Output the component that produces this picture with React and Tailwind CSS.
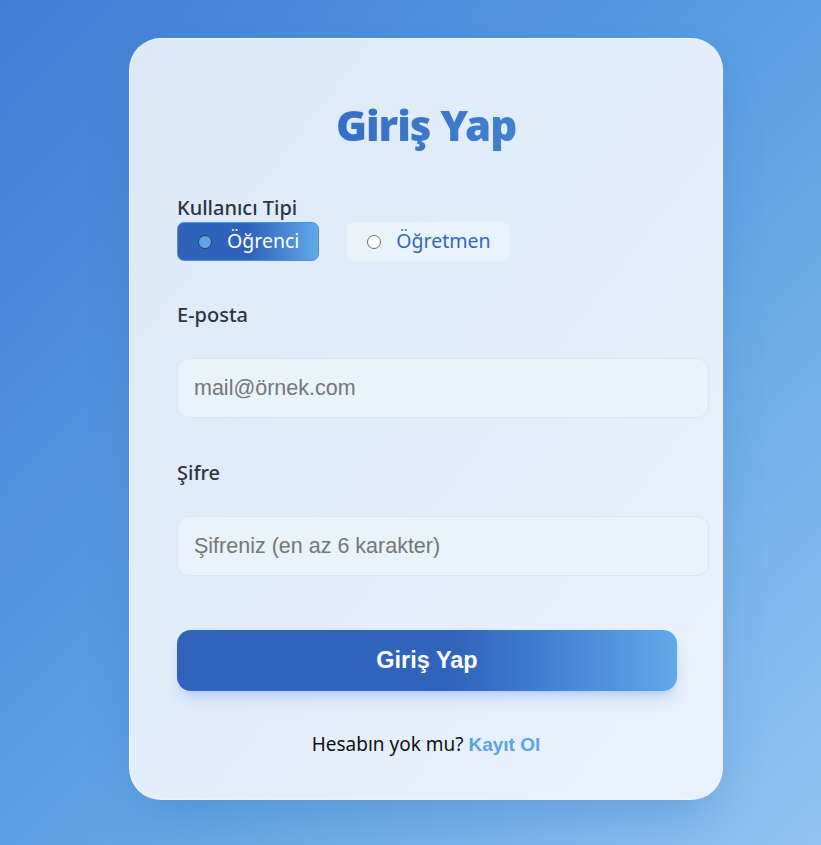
// Login page: user type toggle, email and password fields.
import { useState } from 'react';

const uiFont = "font-['Noto_Sans','Open_Sans',sans-serif]";
const arial = "font-['Liberation_Sans',Arial,sans-serif]";

function RadioChip({ label, active, onClick }) {
  return (
    <button
      type="button"
      onClick={onClick}
      className={`flex items-center h-[39px] pl-[20px] pr-[19px] gap-[15px] rounded-[7px] text-[19.5px] ${
        active
          ? 'bg-gradient-to-r from-[#2e62bb] from-50% to-[#62a9e8] text-white border border-[#4f8fd8]'
          : 'bg-[#e9f3fc] text-[#3467be]'
      }`}
    >
      <span
        className={`w-[14px] h-[14px] rounded-full border-[1.5px] ${
          active ? 'bg-[#5ea4e4] border-[#3a3f48]' : 'bg-white border-[#6b6b6b]'
        }`}
      />
      <span className="leading-none -mt-[2px]">{label}</span>
    </button>
  );
}

export default function App() {
  const [role, setRole] = useState('student');

  return (
    <div className={`min-h-[845px] w-full bg-gradient-to-br from-[#3f7ed2] via-[#5a9fe2] to-[#93c4f2] flex pl-[129px] pt-[38px] ${uiFont}`}>
      <div className="w-[594px] h-[762px] shrink-0 rounded-[32px] bg-gradient-to-br from-[#dde9f8] to-[#e9f2fc] border border-white/40 shadow-2xl shadow-[#2a5fa8]/30 px-[47px] pt-[65px]">
        <h1 className="text-center text-[42px] font-black leading-none tracking-tight bg-gradient-to-r from-[#2c60ba] to-[#4c8ed9] bg-clip-text text-transparent pb-[8px] mb-[43px]">
          Giriş Yap
        </h1>

        <p className="text-[20px] font-medium text-[#2c3442] leading-[22px] mb-[3px]">Kullanıcı Tipi</p>
        <div className="flex gap-[28px]">
          <RadioChip label="Öğrenci" active={role === 'student'} onClick={() => setRole('student')} />
          <RadioChip label="Öğretmen" active={role === 'teacher'} onClick={() => setRole('teacher')} />
        </div>

        <label className="block text-[20px] font-medium text-[#2c3442] leading-[22px] mt-[43px]">E-posta</label>
        <input
          type="email"
          placeholder="mail@örnek.com"
          className={`block mt-[32px] w-[532px] h-[60px] rounded-[12px] bg-[#e8f3fc] border border-[#dbe5f3] px-[16px] text-[21.5px] placeholder:text-[#777777] outline-none ${arial}`}
        />

        <label className="block text-[20px] font-medium text-[#2c3442] leading-[22px] mt-[44px]">Şifre</label>
        <input
          type="password"
          placeholder="Şifreniz (en az 6 karakter)"
          className={`block mt-[32px] w-[532px] h-[60px] rounded-[12px] bg-[#e8f3fc] border border-[#dbe5f3] px-[16px] text-[21.5px] placeholder:text-[#777777] outline-none ${arial}`}
        />

        <button
          type="button"
          className={`block mt-[54px] w-[500px] h-[61px] rounded-[14px] bg-gradient-to-r from-[#2f63bc] from-55% to-[#61a9e9] text-white text-[23.5px] font-bold shadow-lg shadow-[#4a86d6]/25 ${arial}`}
        >
          Giriş Yap
        </button>

        <p className="text-center text-[19px] text-[#111] mt-[39px]">
          Hesabın yok mu? <a className={`font-bold text-[#5aa2e6] ${arial}`}>Kayıt Ol</a>
        </p>
      </div>
    </div>
  );
}
